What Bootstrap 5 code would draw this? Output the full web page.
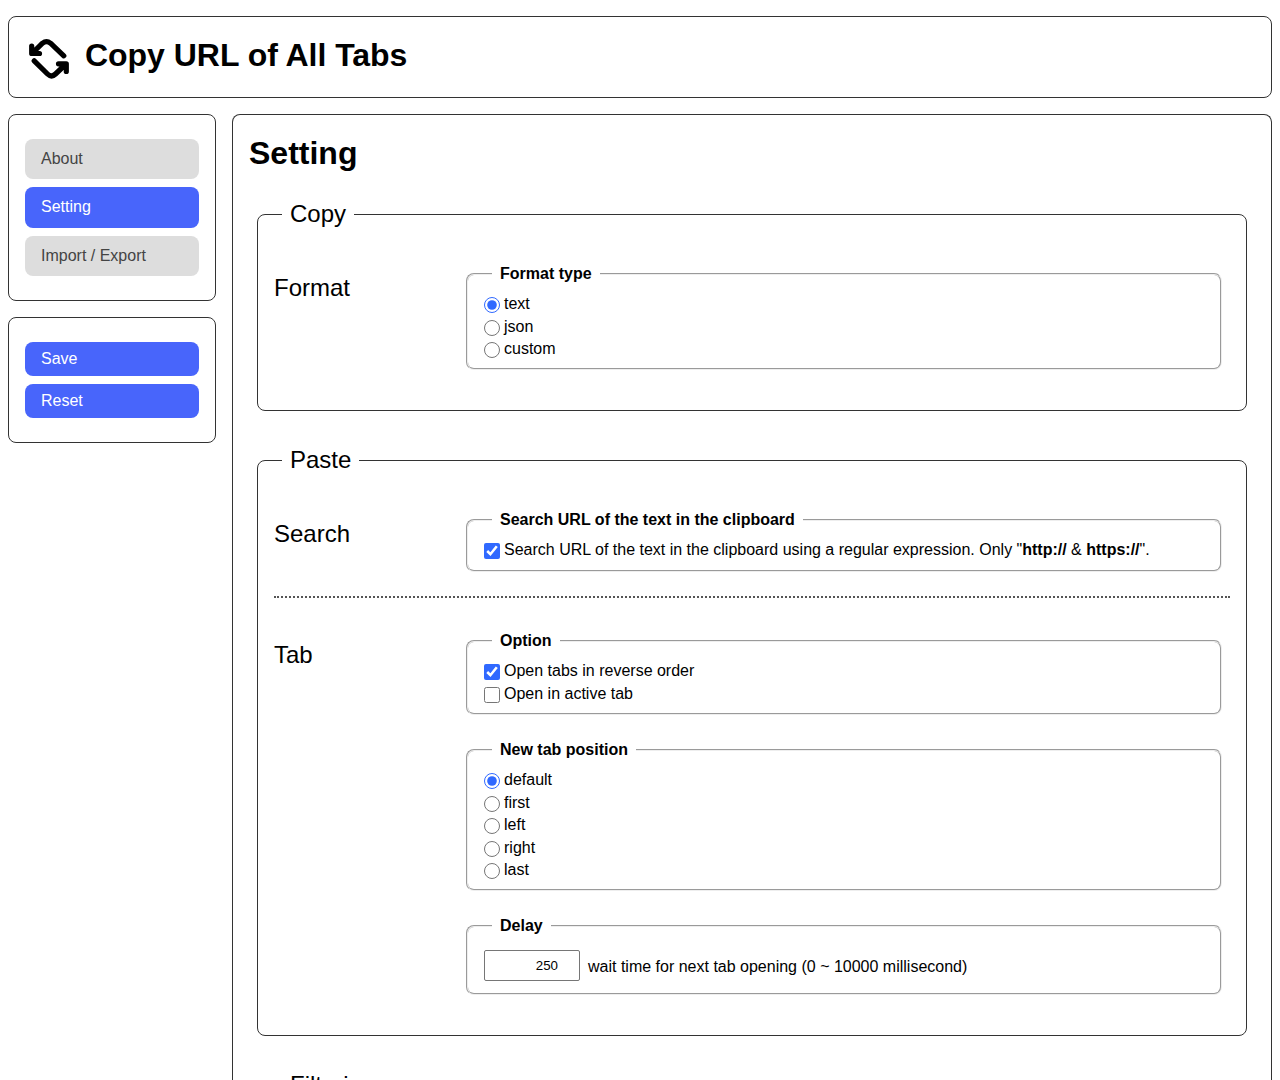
<!DOCTYPE html>
<html lang="en">
<head>
<meta charset="utf-8">
<title>Copy URL of All Tabs</title>
<link href="https://cdn.jsdelivr.net/npm/bootstrap@5.3.0/dist/css/bootstrap.min.css" rel="stylesheet">
<style>
body{font-family:"Liberation Sans",Arial,sans-serif;font-size:16px;line-height:18px;color:#000;background:#fff;height:1080px;overflow:hidden;padding:16px 8px 0}
.panel{border:1px solid #333;border-radius:8px}
.top-panel{height:82px;padding:2px 0 0 19px}
.top-panel h1,.main-panel h1{font-size:32px;font-weight:700;line-height:37px;margin:0}
.top-panel h1{padding:3px 0 8px 15px;letter-spacing:-.03px}
.top-panel svg{margin-top:1px}
.side-col{width:208px;flex:none}
.side-panel{padding:24px 16px}
.side-btn{display:block;width:100%;border:0;border-radius:8px;text-align:left;padding:0 16px;line-height:18px;color:#fff;background:#4865fb;height:34px;text-decoration:none}
.nav-btn{height:40.4px;padding-top:11px}
.act-btn{padding-top:8px}
.gray-btn{background:#ddd;color:#444}
.main-panel{height:966px;padding:20px 24px 0;border-bottom:0;border-radius:8px 8px 0 0;min-width:0}
.main-panel h1{margin:0 0 28px -8px}
legend{float:none;width:auto;margin:0;color:#000}
.group-set{border:1px solid #333;border-radius:8px;padding:36px 16px 40px;margin:0 0 35px}
.group-set>legend{font-size:24px;line-height:27px;padding:0 8px 2px;margin-left:8px}
.group-label{width:192px;flex:none;font-size:24px;line-height:29px;padding-top:8px}
.opt-set{border:2px groove #eee;border-radius:8px;padding:9px 16px 8px;margin-right:8px}
.opt-set>legend{font-size:16px;line-height:18px;font-weight:700;padding:0 8px;margin-left:8px}
.opt-set label{display:flex;height:22.5px;align-items:center;line-height:18px;padding-top:2px}
.opt-set input[type=radio],.opt-set input[type=checkbox]{width:16px;height:16px;margin:1.800px 4px 0 0;flex:none;accent-color:#3069ff}
.search-set{padding-bottom:10px}
.opts-set{padding-bottom:9px}
.pos-set{padding-bottom:8.500px}
.delay-set{padding-top:11px}
.tab-sets{gap:26px}
.dots{border-bottom:2px dotted #555;padding-bottom:24px;margin-bottom:34px}
.delay-in{width:96px;height:31px;border:1px solid #767676;border-radius:2px;font-size:13.333px;text-align:right;padding:1px 21px 1px 2px;margin-right:8px;color:#000}
.wait-txt{padding-top:3px}
</style>
<script src="https://cdn.jsdelivr.net/npm/bootstrap@5.3.0/dist/js/bootstrap.bundle.min.js"></script>
</head>
<body>
<header class="panel top-panel d-flex align-items-center mb-3">
<svg width="42" height="42" viewBox="0 0 42 42" fill="none" stroke="#000" stroke-width="5.2" stroke-linecap="round" stroke-linejoin="round"><path d="M35.800 17.800 22.500 5.200Q18.500 2 14.500 5.200L4.500 15M3.700 8V15.500H11.500M6.200 22.800 19.500 36Q23.500 39.800 27.500 36L37 27M30.500 25.800H38.300V33.500"/></svg>
<h1>Copy URL of All Tabs</h1>
</header>
<div class="d-flex gap-3 align-items-start">
<aside class="side-col d-flex flex-column gap-3">
<nav class="panel side-panel d-flex flex-column gap-2">
<a class="side-btn nav-btn gray-btn">About</a>
<a class="side-btn nav-btn">Setting</a>
<a class="side-btn nav-btn gray-btn">Import / Export</a>
</nav>
<div class="panel side-panel d-flex flex-column gap-2">
<a class="side-btn act-btn">Save</a>
<a class="side-btn act-btn">Reset</a>
</div>
</aside>
<main class="panel main-panel flex-grow-1">
<h1>Setting</h1>
<fieldset class="group-set"><legend>Copy</legend>
<div class="d-flex"><div class="group-label">Format</div>
<div class="flex-grow-1">
<fieldset class="opt-set"><legend>Format type</legend>
<label><input type="radio" name="fmt" checked>text</label>
<label><input type="radio" name="fmt">json</label>
<label><input type="radio" name="fmt">custom</label>
</fieldset></div></div>
</fieldset>
<fieldset class="group-set"><legend>Paste</legend>
<div class="d-flex dots"><div class="group-label">Search</div>
<div class="flex-grow-1">
<fieldset class="opt-set search-set"><legend>Search URL of the text in the clipboard</legend>
<label><input type="checkbox" checked><span>Search URL of the text in the clipboard using a regular expression. Only "<b>http://</b> &amp; <b>https://</b>".</span></label>
</fieldset></div></div>
<div class="d-flex"><div class="group-label">Tab</div>
<div class="flex-grow-1 d-flex flex-column tab-sets">
<fieldset class="opt-set opts-set"><legend>Option</legend>
<label><input type="checkbox" checked>Open tabs in reverse order</label>
<label><input type="checkbox">Open in active tab</label>
</fieldset>
<fieldset class="opt-set pos-set"><legend>New tab position</legend>
<label><input type="radio" name="pos" checked>default</label>
<label><input type="radio" name="pos">first</label>
<label><input type="radio" name="pos">left</label>
<label><input type="radio" name="pos">right</label>
<label><input type="radio" name="pos">last</label>
</fieldset>
<fieldset class="opt-set delay-set"><legend>Delay</legend>
<div class="d-flex align-items-center py-1"><input class="delay-in" type="text" value="250"><span class="wait-txt">wait time for next tab opening (0 ~ 10000 millisecond)</span></div>
</fieldset>
</div></div>
</fieldset>
<fieldset class="group-set mb-0"><legend>Filtering</legend></fieldset>
</main>
</div>
</body>
</html>
